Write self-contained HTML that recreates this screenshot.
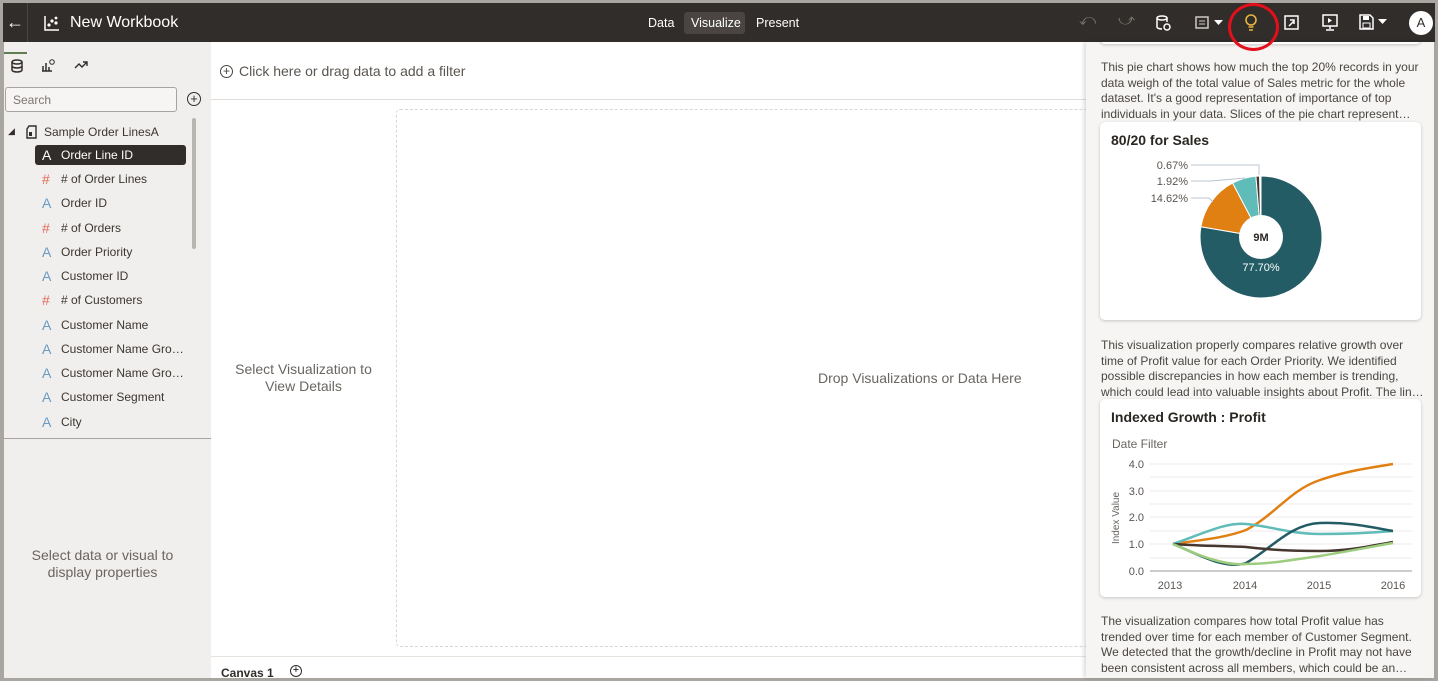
<!DOCTYPE html>
<html><head><meta charset="utf-8"><style>
*{box-sizing:border-box;margin:0;padding:0}
body{width:1438px;height:681px;overflow:hidden;background:#a9a6a2;font-family:"Liberation Sans",sans-serif;position:relative}
.a{position:absolute}
#hdr{left:3px;top:3px;width:1432px;height:39px;background:#312d2a}
#left{left:4px;top:42px;width:207px;height:636px;background:#f1efed}
#main{left:211px;top:42px;width:876px;height:636px;background:#fff}
#right{left:1086px;top:42px;width:348px;height:636px;background:#f6f5f3;box-shadow:-2px 0 4px rgba(0,0,0,.15);overflow:hidden}
.fi{position:absolute;left:31px;width:151px;height:20px;font-size:12px;color:#3a3632;line-height:20px;padding-left:26px}
.fi .ic{position:absolute;left:7px;top:0;font-size:14px;color:#6b9ac4}
.fi .h{color:#e06c5a}
.card{position:absolute;left:14px;width:321px;background:#fff;border-radius:5px;box-shadow:0 1px 3px rgba(0,0,0,.2)}
.txt{position:absolute;left:15px;width:330px;font-size:12px;line-height:15.5px;color:#4a4642;white-space:nowrap}
.ti{color:#fff;font-size:12.5px;position:absolute;top:13px}
</style></head><body>
<div id="hdr" class="a">
 <div class="a" style="left:0;top:0;width:25px;height:39px;border-right:1px solid #4a4542;color:#fff;font-size:18px;line-height:38px;text-align:center">←</div>
 <svg class="a" style="left:41px;top:12px" width="16" height="16" viewBox="0 0 16 16"><path d="M1 1v14h14" stroke="#fff" stroke-width="1.5" fill="none"/><circle cx="5" cy="10" r="1.6" fill="#fff"/><circle cx="8" cy="6" r="1.6" fill="#fff"/><circle cx="12" cy="8" r="1.6" fill="#fff"/><circle cx="12" cy="3" r="1.4" fill="#fff"/></svg>
 <div class="a" style="left:67px;top:11px;color:#fff;font-size:16px">New Workbook</div>
 <div class="ti" style="left:645px">Data</div>
 <div class="a" style="left:681px;top:9px;width:61px;height:22px;background:#4a4542;border-radius:3px"></div>
 <div class="ti" style="left:688px">Visualize</div>
 <div class="ti" style="left:753px">Present</div>
 <div class="a" style="left:1076px;top:9px;color:#7a7570;font-size:16px">⤺</div>
 <div class="a" style="left:1115px;top:9px;color:#7a7570;font-size:16px">⤻</div>
 <svg class="a" style="left:1152px;top:12px" width="16" height="16"><ellipse cx="7" cy="3" rx="5" ry="2" fill="none" stroke="#fff" stroke-width="1.5"/><path d="M2 3v9c0 1 2 2 5 2M12 3v4" stroke="#fff" stroke-width="1.5" fill="none"/><circle cx="12" cy="12" r="3" fill="none" stroke="#fff" stroke-width="1.5"/></svg>
 <svg class="a" style="left:1192px;top:13px" width="30" height="14"><rect x="1" y="1" width="12" height="11" fill="none" stroke="#cfcac5" stroke-width="1.5"/><path d="M4 5h6M4 8h6" stroke="#cfcac5"/><path d="M19 4h9l-4.5 5z" fill="#fff"/></svg>
 <svg class="a" style="left:1241px;top:11px" width="14" height="18"><circle cx="7" cy="6" r="5" fill="none" stroke="#e8b340" stroke-width="1.6"/><path d="M4.5 13h5M5 16h4" stroke="#e8b340" stroke-width="1.6"/></svg>
 <div class="a" style="left:1225px;top:0;width:51px;height:48px;border:3px solid #e3101b;border-radius:50%;z-index:5"></div>
 <svg class="a" style="left:1281px;top:12px" width="16" height="16"><rect x="1" y="1" width="13" height="13" fill="none" stroke="#fff" stroke-width="1.5"/><path d="M5 11l5-5M6 5h4v4" stroke="#fff" stroke-width="1.5" fill="none"/></svg>
 <svg class="a" style="left:1319px;top:11px" width="16" height="18"><rect x="1" y="1" width="14" height="11" fill="none" stroke="#fff" stroke-width="1.5"/><path d="M6 4l4 2.5L6 9z" fill="#fff"/><path d="M8 12v3M4 16h8" stroke="#fff" stroke-width="1.5"/></svg>
 <svg class="a" style="left:1356px;top:11px" width="30" height="16"><path d="M1 1h10l3 3v11H1z" fill="none" stroke="#fff" stroke-width="1.5"/><rect x="4" y="2" width="6" height="4" fill="#fff"/><rect x="4" y="9" width="7" height="5" fill="none" stroke="#fff"/><path d="M19 5h9l-4.5 5z" fill="#fff"/></svg>
 <div class="a" style="left:1406px;top:8px;width:24px;height:24px;border-radius:50%;background:#fff;color:#312d2a;font-size:13px;text-align:center;line-height:24px">A</div>
</div>
<div id="left" class="a">
 <div class="a" style="left:0;top:10px;width:23px;height:2px;background:#5f7d4f"></div>
 <svg class="a" style="left:6px;top:17px" width="14" height="14"><ellipse cx="7" cy="3" rx="5" ry="2" fill="none" stroke="#312d2a" stroke-width="1.5"/><path d="M2 3v8c0 1 2 2 5 2s5-1 5-2V3M2 7c0 1 2 2 5 2s5-1 5-2" fill="none" stroke="#312d2a" stroke-width="1.5"/></svg>
 <svg class="a" style="left:37px;top:16px" width="14" height="14"><path d="M2 13V8M5 13V5M8 13V9M1 13h10" stroke="#312d2a" stroke-width="1.5"/><circle cx="11" cy="4" r="2.3" fill="none" stroke="#312d2a"/></svg>
 <svg class="a" style="left:70px;top:18px" width="14" height="10"><path d="M1 8l4-4 3 3 5-5M9 2h4v4" fill="none" stroke="#312d2a" stroke-width="1.4"/></svg>
 <div class="a" style="left:1px;top:45px;width:172px;height:25px;border:1px solid #a8a39e;border-radius:3px;background:#f6f5f3;font-size:12px;color:#7a7570;padding:5px 7px">Search</div>
 <div class="a" style="left:183px;top:50px;width:14px;height:14px;border:1.5px solid #312d2a;border-radius:50%;font-size:13px;line-height:11px;text-align:center;color:#312d2a">+</div>
 <div class="a" style="left:188px;top:76px;width:4px;height:131px;background:#b9b5b1;border-radius:2px"></div>
 <div class="a" style="left:4px;top:84px;font-size:9px;color:#312d2a">◢</div>
 <svg class="a" style="left:21px;top:83px" width="13" height="14"><path d="M4 1h7v12H2V4z" fill="none" stroke="#312d2a" stroke-width="1.4"/><rect x="4" y="7" width="3" height="4" fill="#312d2a"/></svg>
 <div class="a" style="left:40px;top:83px;font-size:12px;color:#3a3632">Sample Order LinesA</div>
 <div class="fi" style="top:103px;background:#312d2a;color:#fff;border-radius:3px"><span class="ic" style="color:#fff">A</span>Order Line ID</div>
 <div class="fi" style="top:127px"><span class="ic h">#</span># of Order Lines</div>
 <div class="fi" style="top:151px"><span class="ic">A</span>Order ID</div>
 <div class="fi" style="top:176px"><span class="ic h">#</span># of Orders</div>
 <div class="fi" style="top:200px"><span class="ic">A</span>Order Priority</div>
 <div class="fi" style="top:224px"><span class="ic">A</span>Customer ID</div>
 <div class="fi" style="top:248px"><span class="ic h">#</span># of Customers</div>
 <div class="fi" style="top:273px"><span class="ic">A</span>Customer Name</div>
 <div class="fi" style="top:297px"><span class="ic">A</span>Customer Name Gro…</div>
 <div class="fi" style="top:321px"><span class="ic">A</span>Customer Name Gro…</div>
 <div class="fi" style="top:345px"><span class="ic">A</span>Customer Segment</div>
 <div class="fi" style="top:370px"><span class="ic">A</span>City</div>
 <div class="a" style="left:0;top:396px;width:207px;height:1px;background:#a8a39e"></div>
 <div class="a" style="left:0;top:505px;width:197px;text-align:center;font-size:14px;line-height:17px;color:#6a6560">Select data or visual to<br>display properties</div>
</div>
<div id="main" class="a">
 <div class="a" style="left:9px;top:23px;width:13px;height:13px;border:1.4px solid #4a4642;border-radius:50%;font-size:12px;line-height:10px;text-align:center;color:#4a4642">+</div>
 <div class="a" style="left:28px;top:21px;font-size:14px;color:#5a5550">Click here or drag data to add a filter</div>
 <div class="a" style="left:0;top:57px;width:876px;height:1px;background:#e0ddd9"></div>
 <div class="a" style="left:0;top:319px;width:185px;text-align:center;font-size:14px;line-height:17px;color:#6a6560">Select Visualization to<br>View Details</div>
 <div class="a" style="left:185px;top:67px;width:700px;height:538px;border:1px dashed #dad7d3;border-radius:4px"></div>
 <div class="a" style="left:607px;top:328px;font-size:14px;color:#6a6560">Drop Visualizations or Data Here</div>
 <div class="a" style="left:0;top:614px;width:876px;height:1px;background:#e6e3df"></div>
 <div class="a" style="left:10px;top:624px;font-size:12px;font-weight:bold;color:#312d2a">Canvas 1</div>
 <div class="a" style="left:79px;top:623px;width:12px;height:12px;border:1.2px solid #312d2a;border-radius:50%;font-size:11px;line-height:9px;text-align:center">+</div>
</div>
<div id="right" class="a">
 <div class="card" style="top:-10px;height:12px"></div>
 <div class="txt" style="top:18px">This pie chart shows how much the top 20% records in your<br>data weigh of the total value of Sales metric for the whole<br>dataset. It's a good representation of importance of top<br>individuals in your data. Slices of the pie chart represent…</div>
 <div class="card" style="top:80px;height:198px">
  <div class="a" style="left:11px;top:10px;font-size:14px;font-weight:bold;color:#2a2622">80/20 for Sales</div>
 </div>
 <svg class="a" style="left:0;top:0" width="348" height="560" viewBox="1086 42 348 560">
  <g stroke="#fff" stroke-width="1">
  <path d="M1261 237L1261 176A61 61 0 1 1 1200.9 226.7Z" fill="#235c64"/>
  <path d="M1261 237L1200.9 226.7A61 61 0 0 1 1232.6 183Z" fill="#e07f12"/>
  <path d="M1261 237L1232.6 183A61 61 0 0 1 1255.9 176.2Z" fill="#5fbcb8"/>
  <path d="M1261 237L1255.9 176.2A61 61 0 0 1 1259.5 176Z" fill="#45362e"/>
  </g>
  <circle cx="1261" cy="237" r="22" fill="#fff"/>
  <text x="1261" y="241" font-size="11" font-weight="bold" text-anchor="middle" fill="#2a2622" font-family="Liberation Sans">9M</text>
  <text x="1261" y="271" font-size="11" text-anchor="middle" fill="#fff" font-family="Liberation Sans">77.70%</text>
  <g fill="none" stroke="#b8c4d0" stroke-width="1"><path d="M1191 165h68v10"/><path d="M1191 181h20l34-3"/><path d="M1191 198h18l4 4"/></g>
  <g font-size="11" fill="#5a5550" text-anchor="end" font-family="Liberation Sans"><text x="1188" y="169">0.67%</text><text x="1188" y="185">1.92%</text><text x="1188" y="202">14.62%</text></g>
 </svg>
 <div class="txt" style="top:296px">This visualization properly compares relative growth over<br>time of Profit value for each Order Priority. We identified<br>possible discrepancies in how each member is trending,<br>which could lead into valuable insights about Profit. The lin…</div>
 <div class="card" style="top:357px;height:198px">
  <div class="a" style="left:11px;top:10px;font-size:14px;font-weight:bold;color:#2a2622">Indexed Growth : Profit</div>
  <div class="a" style="left:12px;top:38px;font-size:12px;color:#6a6560">Date Filter</div>
 </div>
 <svg class="a" style="left:0;top:0" width="348" height="636" viewBox="1086 42 348 636" font-family="Liberation Sans">
  <g stroke="#eceae8"><path d="M1150 464H1412M1150 477H1412M1150 491H1412M1150 504H1412M1150 517H1412M1150 531H1412M1150 544H1412M1150 558H1412"/></g>
  <path d="M1150 571H1412" stroke="#999"/>
  <g font-size="11" fill="#5a5550" text-anchor="end"><text x="1144" y="468">4.0</text><text x="1144" y="495">3.0</text><text x="1144" y="521">2.0</text><text x="1144" y="548">1.0</text><text x="1144" y="575">0.0</text></g>
  <text transform="translate(1119 518) rotate(-90)" font-size="10" fill="#6a6560" text-anchor="middle">Index Value</text>
  <g font-size="11" fill="#5a5550" text-anchor="middle"><text x="1170" y="589">2013</text><text x="1245" y="589">2014</text><text x="1319" y="589">2015</text><text x="1393" y="589">2016</text></g>
  <g fill="none" stroke-width="2.5">
   <path d="M1173 544C1200 540 1225 538 1246 530C1275 515 1290 490 1320 480C1350 470 1370 468 1393 464" stroke="#e07f12"/>
   <path d="M1173 544C1200 535 1225 522 1246 524C1270 526 1290 534 1320 534C1350 534 1370 533 1393 531" stroke="#5fbcb8"/>
   <path d="M1173 544C1200 555 1225 570 1246 563C1270 550 1290 524 1320 523C1350 522 1370 527 1393 531" stroke="#235c64"/>
   <path d="M1173 544C1200 546 1225 546 1246 547C1270 550 1290 551 1320 551C1350 551 1370 546 1393 542" stroke="#45362e"/>
   <path d="M1173 544C1200 556 1225 566 1246 564C1270 564 1290 560 1320 556C1350 551 1370 547 1393 543" stroke="#9ccc7e"/>
  </g>
 </svg>
 <div class="txt" style="top:572px">The visualization compares how total Profit value has<br>trended over time for each member of Customer Segment.<br>We detected that the growth/decline in Profit may not have<br>been consistent across all members, which could be an…</div>
</div>
</body></html>
